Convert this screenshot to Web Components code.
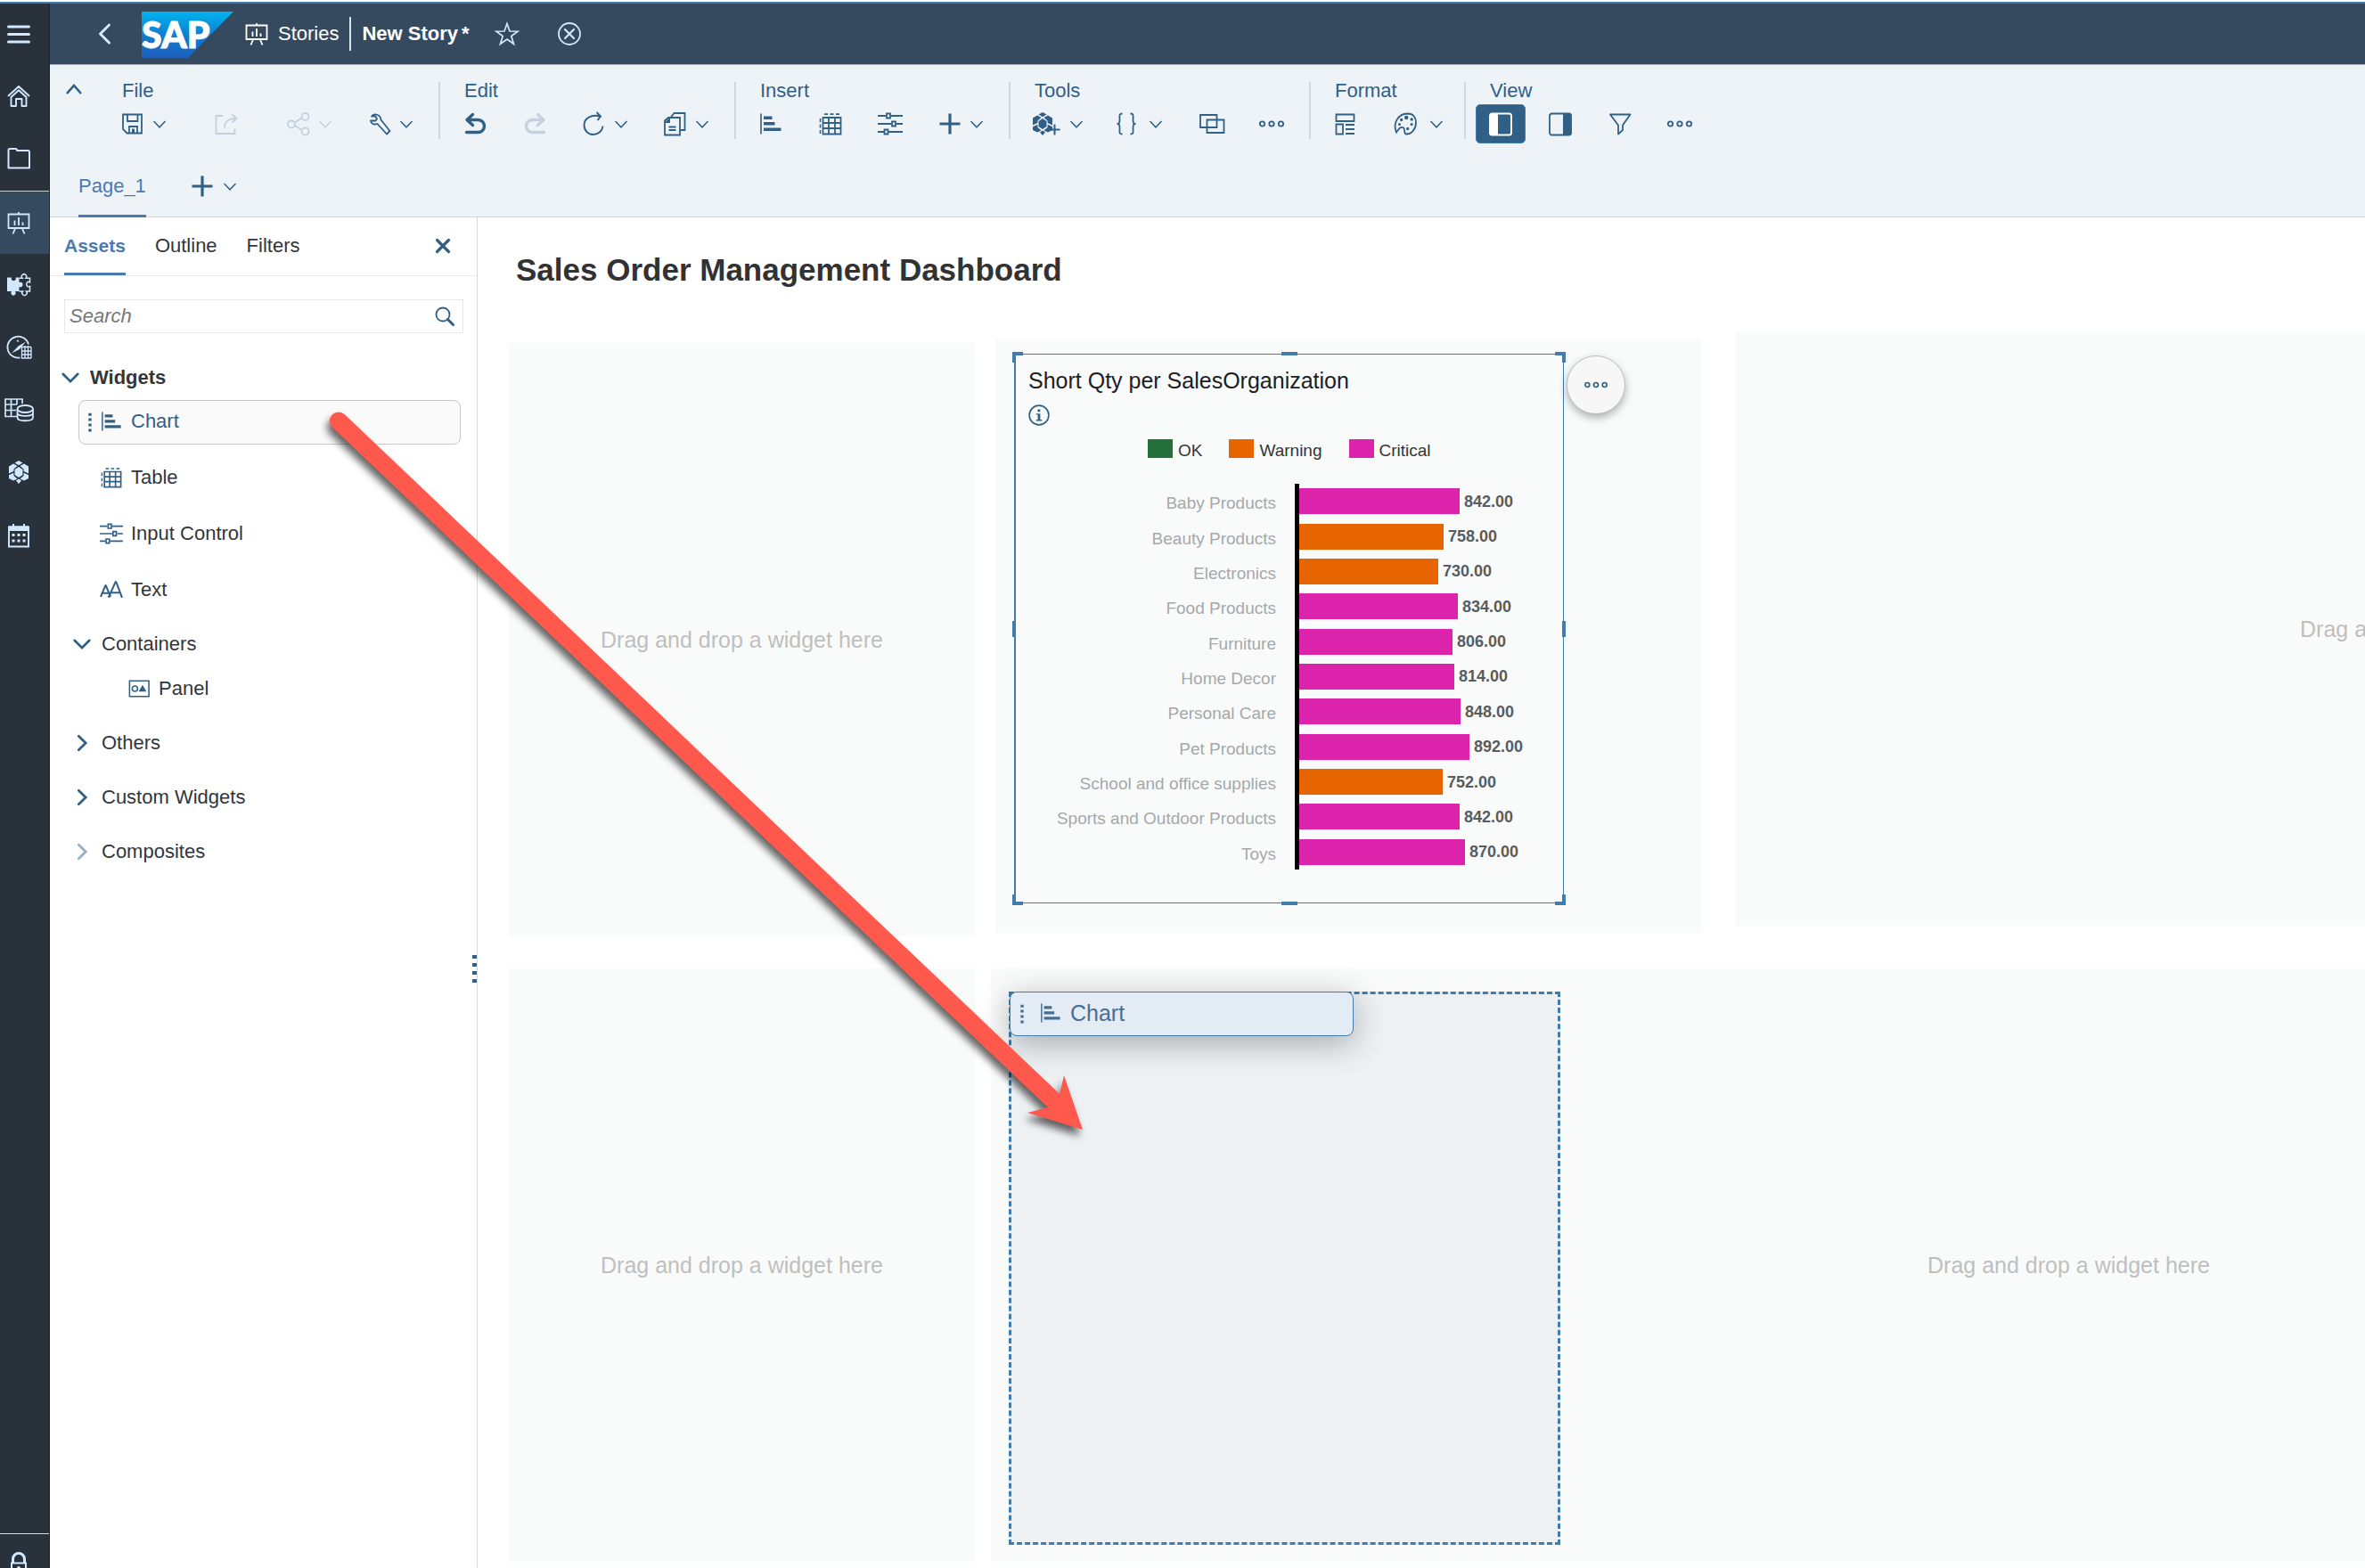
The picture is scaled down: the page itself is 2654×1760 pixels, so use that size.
<!DOCTYPE html>
<html lang="en">
<head>
<meta charset="utf-8">
<title>New Story - Stories</title>
<style>
html, body { margin: 0; height: 100%; }
body { font-family: "Liberation Sans", Arial, sans-serif; font-size: 22px; line-height: 28px; color: #32363a; background: #fff; overflow: hidden; }
</style>
</head>
<body>
<story-app></story-app>
<script>
const RESET = `
*, *::before, *::after { box-sizing: border-box; }
button, input { font: inherit; color: inherit; background: none; border: 0; margin: 0; padding: 0; }
a { color: inherit; text-decoration: none; }
`;

function define(name, css, html, setup) {
  const tpl = document.createElement('template');
  tpl.innerHTML = `<style>${RESET}${css}</style>${html}`;
  customElements.define(name, class extends HTMLElement {
    constructor() {
      super();
      this.attachShadow({ mode: 'open' }).append(tpl.content.cloneNode(true));
    }
    connectedCallback() {
      if (setup && !this.ready) { this.ready = true; setup(this, this.shadowRoot); }
    }
  });
}

/* Every icon lives on a 26 x 26 grid and takes its colour from the text. */
const S = (d, w = 1.8, extra = '') => `<path d="${d}" fill="none" stroke="currentColor" stroke-width="${w}" ${extra}/>`;
const F = (d) => `<path d="${d}" fill="currentColor"/>`;
const CUBE = F('M13 0l4.500 2.600L13 5.200 8.500 2.600zM7 3.500l4.500 2.600L7.500 9.600 7.300 12 2 14.500V6.500zM19 3.500l5 3v8l-5.300-2.500-.2-2.400-4-3.500zM13 7l4.500 3v6L13 19l-4.500-3v-6zM2 16.200l5.300-2.500 .2 3.300 4 3.500-4.500 2L2 20zM24 16.200l-5.300-2.500-.2 3.300-4 3.500 4.500 2L24 20zM13 20.600l3 2-3 3.400-3-3.400z');
const ICONS = {
  menu: S('M1.500 4h23M1.500 12.500h23M1.500 21h23', 3, 'stroke-linecap="round"'),
  home: S('M1 12L13 1l12 11M4.500 13L13 5.200 21.500 13v10h-5v-8h-6.500v8H4.500z', 1.9, 'stroke-linejoin="round"'),
  folder: S('M1.500 22.500V2.500q0-1.500 1.500-1.500h6.500q1.500 0 1.500 2h12.500q1.500 0 1.500 1.500v18z', 2, 'stroke-linejoin="round"'),
  board: S('M1.500 3.500h23v15.500h-23zM13 3.500V1M9 19.500l-2.500 6M17 19.500l2.500 6', 1.8) + S('M8.500 16V10.500M13 16V7M17.500 16v-3.500', 1.8),
  puzzle: F('M0 4.500h5a2.500 2.500 0 1 0 4.500 0H13.500v5.500a2.800 2.800 0 1 1 0 5V20H9a2.700 2.700 0 1 1-4 0H0z') + S('M13.500 5.300H17a2.700 2.700 0 1 1 4 0h4.500v4.500a2.600 2.600 0 1 0 0 4.500V20H21.500a2.700 2.700 0 1 1-4 0H13.500', 1.5),
  compass: S('M14.500 24.500A12 12 0 1 1 24 9.500', 1.8) + F('M21 6.500l-7 8.500-9 4.500 7.500-8zM12 4l1.500 2.500h-3z') + S('M16 12.500h11M16 17h11M16 21h11M16 25h11M16.500 12.500v12.500M20 11v14M23.500 11v14M27 12.500v12.500', 1.3),
  cubes: CUBE,
  database: S('M11 20.500H-2V1h19v5M-2 7h13M-2 13.500h12M4.500 1v19.500M11 1v6', 1.7) + S('M11.500 12v9.500c0 5 17.500 5 17.500 0V12M11.500 16.500c0 4.500 17.500 4.500 17.500 0', 1.8) + '<ellipse cx="20.250" cy="12" rx="8.750" ry="4" fill="none" stroke="currentColor" stroke-width="1.800"/>',
  calendar: S('M2 4.500h22v22H2z', 1.9) + F('M2 3.500h22v5.500H2zM6 1h2v4H6zM18 1h2v4h-2zM5.500 12h3v3h-3zM11.500 12h3v3h-3zM17.500 12h3v3h-3zM5.500 18.500h3v3h-3zM11.500 18.500h3v3h-3zM17.500 18.500h3v3h-3z'),
  lock: S('M6.500 12V8a6.500 6.500 0 0 1 13 0v4', 3) + S('M5 12.500h16v12H5z', 2) + F('M11 18a2 2 0 1 1 4 0v6h-4z'),
  back: S('M18.500 3L8.500 13l10 10', 3, 'stroke-linecap="round" stroke-linejoin="round"'),
  star: S('M13 1.500l3 8.500 9 .2-7.200 5.400 2.700 8.700L13 19l-7.500 5.300 2.700-8.700L1 10.200l9-.2z', 1.7),
  cancel: '<circle cx="13" cy="13" r="12" fill="none" stroke="currentColor" stroke-width="1.800"/>' + S('M8 8l10 10M18 8L8 18', 2.2, 'stroke-linecap="round"'),
  up: S('M5 18l8-9 8 9', 2.6),
  chev: S('M4.500 9l8.500 9 8.500-9', 1.9),
  down: S('M4 8.500l9 9 9-9', 3, 'stroke-linecap="round"'),
  right: S('M9 4.500l8.500 8.500L9 21.500', 3, 'stroke-linecap="round"'),
  save: S('M2 2.500h21v21H6.500L2 19z', 1.8) + S('M7 2.500V10h11.500V2.500M9 23.500v-7.500h9v7.500', 1.8) + F('M12 18.500h3v5h-3z'),
  export: S('M9.500 4H1.500v20h21v-5.500M11 17.500c0-7 4-10.500 13-10.500M19.500 2.500l5 4.500-5 4.500', 1.8),
  share: S('M9 11.500l8-5.500M9 15l8 5', 1.8) + '<g fill="none" stroke="currentColor" stroke-width="1.800"><circle cx="5" cy="13.500" r="4"/><circle cx="20.500" cy="5" r="4"/><circle cx="20.500" cy="21.500" r="4"/></g>',
  wrench: S('M4 4.500C7 1 14 2 14.500 8.500L24.500 21l-3.500 3.500L10.500 13C6 14.500 3.500 12.500 3 9.500h5.500l1.500-2-1.500-3z', 1.8, 'stroke-linejoin="round"'),
  undo: S('M4 8.500h12.500a6.700 6.700 0 0 1 0 14H3.500M10.500 2.500L4 8.500l6.500 6', 3.4, 'stroke-linecap="round" stroke-linejoin="round"'),
  redo: S('M23 8.500H10.500a6.700 6.700 0 0 0 0 14h13M16.500 2.500l6.500 6-6.500 6', 3.4, 'stroke-linecap="round" stroke-linejoin="round"'),
  refresh: S('M19 4.500C10 2 1.500 6.500 1.500 14.500 1.500 21 6.500 25 12 25s10-4 10.500-9.500M15.500 0l4.500 4.500L16.500 9', 1.9),
  copy: S('M1 9.500L5 6h13v19.500H1z', 1.8) + S('M8 5.500L11.500 1H23.500v19H19', 1.8) + S('M5.500 16.500h8M5.500 20h8', 1.8) + F('M.5 12L7 5.500V12z'),
  bars: S('M2 1.500v23', 1.6) + F('M5 4.500h9.500v3.500H5zM5 11h12.500v3.500H5zM5 17.500h19.500v3.500H5z'),
  grid: S('M4.500 6h20v18.500h-20zM4.500 12h20M4.500 18h20M11 6v18.500M18 6v18.500', 1.8) + S('M6 2.200h18', 1.700, 'stroke-dasharray="4 2.500"') + S('M1.500 7v17', 1.500, 'stroke-dasharray="4 2.500"'),
  sliders: S('M-1 4H8M14 4h13M-1 13h15M20 13h7M-1 22h7M11 22h16', 1.800) + S('M9 1.500h4v5H9zM15 10.500h4v5h-4zM6.500 19.500h4v5h-4z', 1.800),
  plus: S('M13 1.500v23M1.500 13h23', 3.200),
  cubeplus: `<g transform="translate(-3 0)">${CUBE}</g>` + S('M23.500 13.500v12M17.500 19.500h12', 2),
  braces: S('M8.500 1.500C4.500 1.500 5.500 4 5.500 8s-.5 5-3 5c2.500 0 3 1 3 5s-1 6.500 3 6.500M17.500 1.500c4 0 3 2.500 3 6.500s.5 5 3 5c-2.500 0-3 1-3 5s1 6.500-3 6.500', 1.800),
  overlap: S('M0 3h18.500v14H0zM7.500 8.500h19v14.500h-19z', 1.800),
  dots: '<g fill="none" stroke="currentColor" stroke-width="1.800"><circle cx="2.500" cy="13" r="2.700"/><circle cx="13" cy="13" r="2.700"/><circle cx="23.500" cy="13" r="2.700"/></g>',
  layout: S('M2.500 2.500h20v7.500h-20zM2.500 13.500h7.500v11H2.500zM13 14h10M13 19h10M13 24h10', 1.800),
  palette: S('M3 22.500C-1 13 4 2 15.500 1.500 22 1.500 25 6 25 11.500c0 7-4.500 13-10.500 13-4 0-1-5-3.500-7-3-2-5.500 1-8 5z', 1.800) + F('M12 6a2.200 2.200 0 1 1 4.400 0 2.200 2.200 0 0 1-4.400 0zM18.500 8a1.700 1.700 0 1 1 3.400 0 1.700 1.700 0 0 1-3.400 0zM7 8.500a1.700 1.700 0 1 1 3.400 0 1.700 1.700 0 0 1-3.400 0zM5 13.500a1.500 1.500 0 1 1 3 0 1.500 1.500 0 0 1-3 0zM18.500 13.500a1.600 1.600 0 1 1 3.200 0 1.600 1.600 0 0 1-3.200 0zM14 18.500a1.700 1.700 0 1 1 3.400 0 1.700 1.700 0 0 1-3.400 0z'),
  leftpane: '<rect x="1" y="1.500" width="24" height="24" rx="2.500" fill="none" stroke="#fff" stroke-width="2"/><path d="M1 2h9v23H1z" fill="#fff"/>',
  rightpane: '<rect x="1" y="1.500" width="24" height="24" rx="2.500" fill="none" stroke="currentColor" stroke-width="1.800"/>' + F('M16 1h7q2.500 0 2.500 2.500v20q0 2.500-2.500 2.500h-7z'),
  filter: S('M2 2.500h22.500l-8.500 12v5.500L11 24.500V14.500z', 1.800, 'stroke-linejoin="round"'),
  close: S('M6.500 6.500l13 13M19.500 6.500l-13 13', 3.200, 'stroke-linecap="round"'),
  search: '<circle cx="11" cy="11" r="7.500" fill="none" stroke="currentColor" stroke-width="1.800"/>' + S('M16.500 16.500l6 6', 3, 'stroke-linecap="round"'),
  text: S('M0 21.500L5.700 8h.6L12 21.500M2 17h8', 2.200) + S('M9.500 22.500L18 3.500h.8L26 22.500M12.500 16.500h11', 2.200),
  panel: S('M1.500 3.500h23.500v19H1.500z', 1.700) + '<circle cx="8" cy="13" r="3.300" fill="none" stroke="currentColor" stroke-width="1.700"/>' + F('M12.500 16.500l4.800-8 4.700 8z'),
  grip: F('M11 2h4v3.500h-4zM11 9h4v3.500h-4zM11 16h4v3.500h-4zM11 23h4v3.500h-4z'),
  info: '<circle cx="13" cy="13" r="11.800" fill="none" stroke="currentColor" stroke-width="1.800"/>' + F('M11.300 6h3.200v3h-3.200zM9.500 11h5v7.500h2V20h-7v-1.500h2v-6h-2z')
};

define('ui-icon', `
:host { display: block; flex: none; width: 26px; height: 26px; }
svg { display: block; width: 100%; height: 100%; overflow: visible; }
`, '<svg viewBox="0 0 26 26" aria-hidden="true"></svg>', (el, root) => {
  root.querySelector('svg').innerHTML = ICONS[el.getAttribute('name')];
});

/* ---------- left rail ---------- */
define('side-nav', `
:host { display: flex; flex-direction: column; flex: none; width: 56px; background: #29313a; color: #d1e8ff; border-right: 1px solid #1d242b; overflow: hidden; }
a { display: flex; align-items: center; flex: none; height: 70px; padding-left: 8px; }
a.active { height: 71px; background: #354a5f; border-top: 1px solid #c5d1c9; }
footer { flex: none; margin-top: auto; height: 39px; border-top: 1px solid #d9dde0; }
footer a { align-items: flex-start; padding-top: 20px; }
`, `
<a href="#menu" aria-label="Menu"><ui-icon name="menu"></ui-icon></a>
<a href="#home" aria-label="Home"><ui-icon name="home"></ui-icon></a>
<a href="#files" aria-label="Files"><ui-icon name="folder"></ui-icon></a>
<a href="#stories" class="active" aria-label="Stories"><ui-icon name="board"></ui-icon></a>
<a href="#apps" aria-label="Applications"><ui-icon name="puzzle"></ui-icon></a>
<a href="#digital" aria-label="Digital boardroom"><ui-icon name="compass"></ui-icon></a>
<a href="#datasets" aria-label="Datasets"><ui-icon name="database"></ui-icon></a>
<a href="#modeler" aria-label="Modeler"><ui-icon name="cubes"></ui-icon></a>
<a href="#calendar" aria-label="Calendar"><ui-icon name="calendar"></ui-icon></a>
<footer><a href="#security" aria-label="Security"><ui-icon name="lock"></ui-icon></a></footer>
`);

/* ---------- shell header ---------- */
define('shell-header', `
:host { display: flex; align-items: center; flex: none; height: 69px; padding-left: 48px; background: #354a5f; border-bottom: 1px solid #a9b4be; color: #fff; }
button { color: #d1e8ff; }
.logo { display: block; width: 103px; height: 52px; margin: 2px 13px 0 29px; }
.link { display: flex; align-items: center; gap: 11px; }
.rule { width: 2px; height: 38px; margin: 0 12px; background: #dfe4e8; }
h1 { margin: 0; font-size: 22px; font-weight: bold; display: flex; gap: 4px; }
.star { margin-left: 29px; }
.cancel { margin-left: 44px; }
`, `
<button aria-label="Back"><ui-icon name="back"></ui-icon></button>
<svg class="logo" viewBox="0 0 103 52" role="img" aria-label="SAP">
  <defs><linearGradient id="g" x1="0" y1="0" x2="0" y2="1"><stop offset="0" stop-color="#00b4ee"/><stop offset=".5" stop-color="#0f7ed2"/><stop offset="1" stop-color="#1e5fbb"/></linearGradient></defs>
  <path d="M0 0h103L52 52H0z" fill="url(#g)"/>
  <text x="0" y="41" font-family="Lato, Liberation Sans, sans-serif" font-size="41" font-weight="900" fill="#fff" stroke="#fff" stroke-width="1">SAP</text>
</svg>
<a class="link" href="#stories"><ui-icon name="board"></ui-icon><span>Stories</span></a>
<span class="rule"></span>
<h1><span>New Story</span><span>*</span></h1>
<button class="star" aria-label="Favorite"><ui-icon name="star"></ui-icon></button>
<button class="cancel" aria-label="Close story"><ui-icon name="cancel"></ui-icon></button>
`);

/* ---------- toolbar ---------- */
define('tool-button', `
:host { display: block; flex: none; }
button { display: flex; align-items: center; justify-content: center; width: 56px; height: 44px; border-radius: 5px; }
:host([wide]) button { width: 84px; }
:host([menu]) button { width: 80px; justify-content: flex-start; padding-left: 15px; gap: 7px; }
:host([menu][roomy]) button { gap: 12px; }
:host([menu][wide]) button { width: 85px; gap: 10px; }
:host([active]) button { background: #316087; border: 1px solid #427cac; }
:host([disabled]) { opacity: .22; }
.chev { display: none; width: 20px; height: 20px; }
:host([menu]) .chev { display: block; }
`, '<button><ui-icon></ui-icon><ui-icon class="chev" name="chev"></ui-icon></button>', (el, root) => {
  const icon = document.createElement('ui-icon');
  icon.setAttribute('name', el.getAttribute('icon'));
  root.querySelector('ui-icon:not(.chev)').replaceWith(icon);
  const button = root.querySelector('button');
  button.setAttribute('aria-label', el.getAttribute('label'));
  button.disabled = el.hasAttribute('disabled');
});

define('tool-group', `
:host { display: flex; flex-direction: column; flex: none; }
.label { padding: 1px 0 0 16px; height: 30px; }
.row { display: flex; gap: 11px; }
`, '<div class="label"></div><div class="row"><slot></slot></div>', (el, root) => {
  root.querySelector('.label').textContent = el.getAttribute('label');
});

define('story-toolbar', `
:host { display: block; flex: none; background: #eef3f8; color: #316087; border-bottom: 1px solid #cddaea; }
.groups { display: flex; padding: 14px 0 0 14px; }
.collapse { align-self: flex-start; width: 26px; height: 26px; margin-right: 25px; }
.rule { flex: none; width: 2px; height: 64px; margin: 5px 11px 0 14px; background: #d0d8e0; }
.pages { display: flex; align-items: flex-end; padding: 25px 0 0 32px; height: 82px; }
.page { height: 57px; padding-bottom: 11px; border-bottom: 3px solid #4a7ab0; color: #4a7ab0; margin-bottom: -1px; }
.add { display: flex; align-items: center; gap: 8px; height: 57px; margin: 0 0 6px 50px; }
.add .chev { width: 20px; height: 20px; }
`, `
<div class="groups">
  <button class="collapse" aria-label="Collapse toolbar"><ui-icon name="up"></ui-icon></button>
  <tool-group label="File">
    <tool-button icon="save" label="Save" menu></tool-button>
    <tool-button icon="export" label="Export" wide disabled></tool-button>
    <tool-button icon="share" label="Share" menu disabled></tool-button>
    <tool-button icon="wrench" label="Settings" menu></tool-button>
  </tool-group>
  <span class="rule"></span>
  <tool-group label="Edit">
    <tool-button icon="undo" label="Undo"></tool-button>
    <tool-button icon="redo" label="Redo" disabled></tool-button>
    <tool-button icon="refresh" label="Refresh" menu></tool-button>
    <tool-button icon="copy" label="Copy" menu></tool-button>
  </tool-group>
  <span class="rule"></span>
  <tool-group label="Insert">
    <tool-button icon="bars" label="Chart"></tool-button>
    <tool-button icon="grid" label="Table"></tool-button>
    <tool-button icon="sliders" label="Input control"></tool-button>
    <tool-button icon="plus" label="Add" menu></tool-button>
  </tool-group>
  <span class="rule"></span>
  <tool-group label="Tools">
    <tool-button icon="cubeplus" label="Data" menu roomy></tool-button>
    <tool-button icon="braces" label="Scripting" menu wide></tool-button>
    <tool-button icon="overlap" label="Linked analysis"></tool-button>
    <tool-button icon="dots" label="More tools"></tool-button>
  </tool-group>
  <span class="rule"></span>
  <tool-group label="Format">
    <tool-button icon="layout" label="Layout"></tool-button>
    <tool-button icon="palette" label="Theme" menu roomy></tool-button>
  </tool-group>
  <span class="rule"></span>
  <tool-group label="View">
    <tool-button icon="leftpane" label="Left side panel" active></tool-button>
    <tool-button icon="rightpane" label="Right side panel"></tool-button>
    <tool-button icon="filter" label="Filter"></tool-button>
    <tool-button icon="dots" label="More views"></tool-button>
  </tool-group>
</div>
<div class="pages">
  <button class="page">Page_1</button>
  <button class="add" aria-label="Add page"><ui-icon name="plus"></ui-icon><ui-icon class="chev" name="chev"></ui-icon></button>
</div>
`);

/* ---------- assets panel ---------- */
define('tree-node', `
:host { display: block; margin-top: 12px; }
:host([first]) { margin-top: 0; }
:host([nested]) { padding-left: 13px; }
button { display: flex; align-items: center; gap: 10px; width: 100%; height: 49px; padding-bottom: 3px; text-align: left; }
:host([first]) button { font-weight: bold; height: 50px; padding-bottom: 1px; }
ui-icon { width: 24px; height: 24px; color: #316087; }
:host([faded]) ui-icon { opacity: .5; }
`, '<button><ui-icon></ui-icon><span><slot></slot></span></button>', (el, root) => {
  const icon = document.createElement('ui-icon');
  icon.setAttribute('name', el.hasAttribute('open') ? 'down' : 'right');
  root.querySelector('ui-icon').replaceWith(icon);
});

define('asset-item', `
:host { display: block; }
.item { display: flex; align-items: center; height: 50px; padding: 0 0 2px 24px; border: 1px solid transparent; border-radius: 8px; }
ui-icon { width: 24px; height: 24px; margin-right: 10px; color: #316087; }
.grip { display: none; }
:host([selected]) .item { padding-left: 0; color: #316087; background: #fafafa; border-color: #c8c8c8; }
:host([selected]) .grip, :host([dragging]) .grip { display: block; width: 24px; height: 22px; margin: 0; }
:host([dragging]) .item { padding-left: 1px; font-size: 25px; color: #456f95; background: #e3ebf5; border-color: #427cac; box-shadow: 0 8px 36px rgba(0, 0, 0, .3); }
:host([dragging]) ui-icon { color: #456f95; }
:host([dragging]) .grip + ui-icon { margin: 0 10px 0 8px; }
`, '<div class="item"><ui-icon class="grip" name="grip"></ui-icon><ui-icon class="kind"></ui-icon><span><slot></slot></span></div>', (el, root) => {
  const icon = document.createElement('ui-icon');
  icon.setAttribute('name', el.getAttribute('icon'));
  root.querySelector('.kind').replaceWith(icon);
});

define('assets-panel', `
:host { display: block; position: relative; flex: none; width: 480px; border-right: 1px solid #d9d9d9; background: #fff; }
.tabs { display: flex; align-items: stretch; height: 66px; padding: 0 25px 0 16px; gap: 33px; border-bottom: 1px solid #e8e8e8; }
.tabs button { display: flex; align-items: center; border-bottom: 3px solid transparent; padding-top: 2px; }
.tabs .on { font-weight: bold; font-size: 21px; color: #4a7ab0; border-color: #4a7ab0; }
.tabs .x { margin-left: auto; color: #316087; }
.search { display: flex; align-items: center; height: 38px; margin: 26px 15px 25px 16px; padding: 0 7px 0 5px; border: 1px solid #e8e8e8; }
.search input { flex: 1; min-width: 0; outline: none; }
.search input::placeholder { font-style: italic; color: #74777a; opacity: 1; }
.search ui-icon { color: #316087; }
.tree { padding: 0 18px 0 11px; }
.widgets { display: flex; flex-direction: column; gap: 13px; padding-left: 21px; }
.panel { padding-left: 52px; }
.splitter { position: absolute; right: 0; top: 828px; width: 5px; height: 31px; display: flex; flex-direction: column; justify-content: space-between; }
.splitter i { height: 4px; background: #316087; }
`, `
<div class="tabs" role="tablist">
  <button class="on" role="tab">Assets</button>
  <button role="tab">Outline</button>
  <button role="tab">Filters</button>
  <button class="x" aria-label="Close panel"><ui-icon name="close"></ui-icon></button>
</div>
<label class="search"><input type="text" placeholder="Search" aria-label="Search"><ui-icon name="search"></ui-icon></label>
<div class="tree">
  <tree-node first open>Widgets</tree-node>
  <div class="widgets">
    <asset-item icon="bars" selected>Chart</asset-item>
    <asset-item icon="grid">Table</asset-item>
    <asset-item icon="sliders">Input Control</asset-item>
    <asset-item icon="text">Text</asset-item>
  </div>
  <tree-node nested open>Containers</tree-node>
  <asset-item class="panel" icon="panel">Panel</asset-item>
  <tree-node nested>Others</tree-node>
  <tree-node nested>Custom Widgets</tree-node>
  <tree-node nested faded>Composites</tree-node>
</div>
<span class="splitter"><i></i><i></i><i></i><i></i></span>
`);

/* ---------- story canvas ---------- */
define('drop-lane', `
:host { display: block; flex: none; background: #f9fbfa; }
p { display: flex; align-items: center; justify-content: center; height: 100%; margin: 0; font-size: 25px; color: #bfbfbf; white-space: nowrap; }
`, '<slot><p>Drag and drop a widget here</p></slot>');

define('bar-row', `
:host { display: flex; align-items: center; flex: 1; min-height: 0; }
.name { width: 294px; padding: 5px 21px 0 0; text-align: right; font-size: 19px; color: #a6a8aa; white-space: nowrap; flex: none; }
.plot { flex: 1; display: flex; align-items: center; align-self: stretch; border-left: 5px solid #000; gap: 5px; }
.bar { height: 29px; flex: none; }
.val { font-size: 18px; font-weight: bold; color: #595b5d; }
`, '<span class="name"><slot></slot></span><span class="plot"><span class="bar"></span><span class="val"></span></span>', (el, root) => {
  const v = Number(el.getAttribute('value'));
  const bar = root.querySelector('.bar');
  bar.style.width = Math.round(v / 10 * 2.14) + 'px';
  bar.style.background = v >= 800 ? '#db23ab' : '#e76500';
  root.querySelector('.val').textContent = v.toFixed(2);
});

define('chart-widget', `
:host { display: block; position: relative; width: 617px; height: 617px; border: 1px solid #427cac; border-left-width: 2px; }
.body { height: 100%; display: flex; flex-direction: column; padding: 14px 0 37px 14px; }
h3 { margin: 0; font-size: 25px; line-height: 30px; font-weight: normal; color: #1d2023; }
.info { width: 24px; height: 24px; margin-top: 12px; color: #316087; align-self: flex-start; }
.legend { display: flex; gap: 30px; margin: 15px 0 25px 134px; font-size: 19px; }
.legend span { display: flex; align-items: center; gap: 6px; height: 25px; }
.legend i { width: 28px; height: 21px; background: var(--c); margin-bottom: 4px; }
.rows { flex: 1; display: flex; flex-direction: column; margin-left: 5px; }
.h { position: absolute; background: #427cac; }
.t, .b { width: 18px; height: 4px; left: calc(50% - 9px); }
.t { top: -3px; } .b { bottom: -3px; }
.l, .r { width: 4px; height: 18px; top: calc(50% - 9px); }
.l { left: -4px; } .r { right: -3px; }
.c { position: absolute; width: 12px; height: 12px; border: 0 solid #427cac; }
.tl { left: -4px; top: -3px; border-width: 4px 0 0 4px; }
.tr { right: -3px; top: -3px; border-width: 4px 4px 0 0; }
.bl { left: -4px; bottom: -3px; border-width: 0 0 4px 4px; }
.br { right: -3px; bottom: -3px; border-width: 0 4px 4px 0; }
.more { position: absolute; left: 100%; top: 1px; margin-left: 4px; width: 66px; height: 66px; border-radius: 50%; background: #f7f7f7; border: 1px solid #bdbfc1; box-shadow: 0 4px 10px rgba(0, 0, 0, .3); color: #316087; display: flex; align-items: center; justify-content: center; }
.more ui-icon { width: 24px; height: 24px; }
`, `
<div class="body">
  <h3>Short Qty per SalesOrganization</h3>
  <ui-icon class="info" name="info"></ui-icon>
  <div class="legend">
    <span style="--c:#256f3a"><i></i>OK</span>
    <span style="--c:#e76500"><i></i>Warning</span>
    <span style="--c:#db23ab"><i></i>Critical</span>
  </div>
  <div class="rows">
    <bar-row value="842">Baby Products</bar-row>
    <bar-row value="758">Beauty Products</bar-row>
    <bar-row value="730">Electronics</bar-row>
    <bar-row value="834">Food Products</bar-row>
    <bar-row value="806">Furniture</bar-row>
    <bar-row value="814">Home Decor</bar-row>
    <bar-row value="848">Personal Care</bar-row>
    <bar-row value="892">Pet Products</bar-row>
    <bar-row value="752">School and office supplies</bar-row>
    <bar-row value="842">Sports and Outdoor Products</bar-row>
    <bar-row value="870">Toys</bar-row>
  </div>
</div>
<i class="h t"></i><i class="h b"></i><i class="h l"></i><i class="h r"></i>
<i class="c tl"></i><i class="c tr"></i><i class="c bl"></i><i class="c br"></i>
<button class="more" aria-label="Chart actions"><ui-icon name="dots"></ui-icon></button>
`);

define('drop-target', `
:host { display: block; width: 619px; height: 621px; border: 3px dashed #427cac; background: #edf1f4; }
asset-item { width: 386px; margin: -3px 0 0 -2px; }
`, '<asset-item icon="bars" dragging>Chart</asset-item>');

define('story-canvas', `
:host { display: block; flex: 1; min-width: 0; overflow: hidden; padding: 38px 0 0 35px; }
h2 { margin: 0 0 49px 8px; font-size: 35px; line-height: 42px; font-weight: bold; color: #323232; }
.lanes { display: flex; align-items: flex-start; width: calc(100% + 877px); }
.lanes drop-lane { height: 666px; }
.lanes + .lanes { margin-top: 36px; }
.narrow { width: 523px; margin-top: 12px; }
.mid { width: 792px; margin: 8px 39px 0 23px; padding: 16px 0 0 21px; }
.wide { flex: 1; }
.lanes + .lanes .narrow { margin: 0 18px 0 0; }
.row2 { position: relative; flex: 1; }
drop-target { position: absolute; left: 20px; top: 26px; }
`, `
<h2>Sales Order Management Dashboard</h2>
<div class="lanes">
  <drop-lane class="narrow"></drop-lane>
  <drop-lane class="mid"><chart-widget></chart-widget></drop-lane>
  <drop-lane class="wide"></drop-lane>
</div>
<div class="lanes">
  <drop-lane class="narrow"></drop-lane>
  <div class="row2">
    <drop-lane></drop-lane>
    <drop-target></drop-target>
  </div>
</div>
`);

/* Drag path drawn over the page, from the asset to its drop target. */
define('drag-arrow', `
:host { position: absolute; left: 0; top: 0; width: 1300px; height: 1340px; pointer-events: none; }
svg { display: block; width: 100%; height: 100%; filter: drop-shadow(-3px 7px 4px rgba(0, 0, 0, .6)); }
`, `
<svg viewBox="0 0 1300 1340" aria-hidden="true">
  <path d="M380 472.500L1182 1235" stroke="#fe594c" stroke-width="20" stroke-linecap="round"/>
  <path d="M1215 1268L1194 1207 1189 1229 1176 1243 1153 1249z" fill="#fe594c"/>
</svg>
`);

define('story-app', `
:host { display: flex; flex-direction: column; height: 100vh; position: relative; overflow: hidden; }
.strip { flex: none; height: 4px; border-top: 2px solid #fff; background: #427cac; }
.shell { flex: 1; display: flex; min-height: 0; }
.work { flex: 1; min-width: 0; display: flex; flex-direction: column; }
.content { flex: 1; min-height: 0; display: flex; }
`, `
<div class="strip"></div>
<div class="shell">
  <side-nav></side-nav>
  <div class="work">
    <shell-header></shell-header>
    <story-toolbar></story-toolbar>
    <div class="content">
      <assets-panel></assets-panel>
      <story-canvas></story-canvas>
    </div>
  </div>
</div>
<drag-arrow></drag-arrow>
`);
</script>
</body>
</html>
